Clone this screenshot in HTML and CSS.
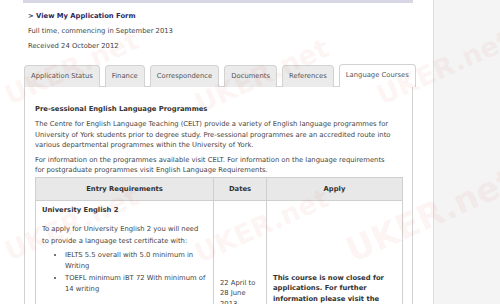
FILE: index.html
```html
<!DOCTYPE html>
<html lang="en">
<head>
  <meta charset="UTF-8">
  <title>My Application</title>
  <link rel="stylesheet" href="styles.css">
</head>
<body>

<div class="page">
  <div class="main">
    <div class="topbar"></div>

    <p class="form-link"><a href="#">&gt; View My Application Form</a></p>
    <p class="meta">Full time, commencing in September 2013</p>
    <p class="meta">Received 24 October 2012</p>

    <ul class="tabs">
      <li>Application Status</li>
      <li>Finance</li>
      <li>Correspondence</li>
      <li>Documents</li>
      <li>References</li>
      <li class="active">Language Courses</li>
    </ul>

    <div class="panel">
      <h3>Pre-sessional English Language Programmes</h3>
      <p>The Centre for English Language Teaching (CELT) provide a variety of English language programmes for University of York students prior to degree study. Pre-sessional programmes are an accredited route into various departmental programmes within the University of York.</p>
      <p>For information on the programmes available visit CELT. For information on the language requirements for postgraduate programmes visit English Language Requirements.</p>

      <table class="courses">
        <thead>
          <tr>
            <th class="col-req">Entry Requirements</th>
            <th class="col-dates">Dates</th>
            <th class="col-apply">Apply</th>
          </tr>
        </thead>
        <tbody>
          <tr>
            <td class="req">
              <h4>University English 2</h4>
              <p>To apply for University English 2 you will need to provide a language test certificate with:</p>
              <ul>
                <li>IELTS 5.5 overall with 5.0 minimum in Writing</li>
                <li>TOEFL minimum iBT 72 With minimum of 14 writing</li>
              </ul>
              <p>Test certificates must be no more than two years old at the start of the course.</p>
              <p>Please contact CELT for details.</p>
            </td>
            <td class="dates">22 April to 28 June 2013</td>
            <td class="apply">This course is now closed for applications. For further information please visit the <a href="#">CELT</a> website.</td>
          </tr>
        </tbody>
      </table>
    </div>
  </div>
  <div class="sidebar"></div>
</div>

<div class="watermarks">
  <span class="wm wm-1">UKER.net</span>
  <span class="wm wm-2">UKER.net</span>
  <span class="wm wm-3">UKER.net</span>
  <span class="wm wm-4">UKER.net</span>
  <span class="wm wm-5">UKER.net</span>
  <span class="wm wm-6">UKER.net</span>
</div>

</body>
</html>
```

FILE: styles.css
```css
body {
  margin: 0;
  font-family: "DejaVu Sans", Verdana, sans-serif;
  font-size: 6.8px;
  color: #444;
  background: #f4f4f4;
  overflow: hidden;
}
.page {
  display: flex;
  min-height: 304px;
}
.main {
  width: 389px;
  padding: 0 20px 0 24px;
  background: #fff;
  border-right: 1px solid #dcdcdc;
}
.sidebar {
  flex: 1;
  background: #f4f4f4;
}
.topbar {
  height: 3px;
  margin-left: -1px;
  background: #d6d6e4;
}
p {
  margin: 0;
}
.form-link {
  margin: 8px 0 0 4px;
  line-height: 10px;
  font-weight: bold;
}
.form-link a {
  color: #2c2a5c;
  text-decoration: none;
}
.meta {
  margin: 5px 0 0 4px;
  line-height: 10px;
}
.tabs {
  display: flex;
  gap: 5px;
  list-style: none;
  margin: 14px 0 -1px 0;
  padding: 0;
}
.tabs li {
  padding: 0 6px;
  height: 21px;
  line-height: 21px;
  white-space: nowrap;
  background: #ebebeb;
  border: 1px solid #d2d2d2;
  border-bottom: none;
  border-radius: 4px 4px 0 0;
  color: #555;
}
.tabs li.active {
  background: #fff;
  height: 22px;
  margin-top: -1px;
  position: relative;
}
.panel {
  border: 1px solid #d2d2d2;
  padding: 17px 10px 20px 10px;
}
.panel h3 {
  margin: 0 0 5px 0;
  font-size: 6.8px;
  line-height: 10px;
  color: #333;
}
.panel > p {
  line-height: 10.5px;
  margin-bottom: 4px;
  padding-right: 6px;
}
.courses {
  width: 368px;
  table-layout: fixed;
  margin-top: -3px;
  border-collapse: collapse;
  font-size: 6.8px;
}
.courses th,
.courses td {
  border: 1px solid #cfcfcf;
}
.courses th {
  height: 20px;
  background: #e8e8e8;
  color: #333;
  font-weight: bold;
}
.col-req {
  width: 175px;
}
.col-dates {
  width: 50px;
}
.courses td {
  vertical-align: middle;
  line-height: 10.5px;
  padding: 4px 6px;
}
.courses td.req {
  padding-right: 3px;
}
.req h4 {
  margin: 0 0 8px 0;
  font-size: 6.8px;
  line-height: 10px;
  color: #333;
}
.req p {
  line-height: 12px;
  margin-bottom: 3px;
  padding-right: 3px;
}
.req ul {
  margin: 0 0 40px 0;
  padding-left: 23px;
  line-height: 11.5px;
}
.req ul + p {
  margin-bottom: 8px;
}
.dates {
  color: #444;
}
.apply {
  font-weight: bold;
  color: #333;
  line-height: 11px;
}
.apply a {
  color: #444;
  font-weight: normal;
  text-decoration: underline;
}
.watermarks {
  position: absolute;
  top: 0;
  left: 0;
  width: 500px;
  height: 304px;
  pointer-events: none;
}
.wm {
  position: absolute;
  font-family: "DejaVu Sans", sans-serif;
  font-weight: bold;
  font-size: 27px;
  color: rgba(225, 80, 80, 0.08);
  transform: rotate(-24deg);
  white-space: nowrap;
}
.wm-1 { left: 0; top: 52px; }
.wm-2 { left: 190px; top: 60px; }
.wm-3 { left: 372px; top: 52px; }
.wm-4 { left: 0; top: 208px; }
.wm-5 { left: 190px; top: 210px; }
.wm-6 { left: 340px; top: 195px; font-size: 34px; }
```
